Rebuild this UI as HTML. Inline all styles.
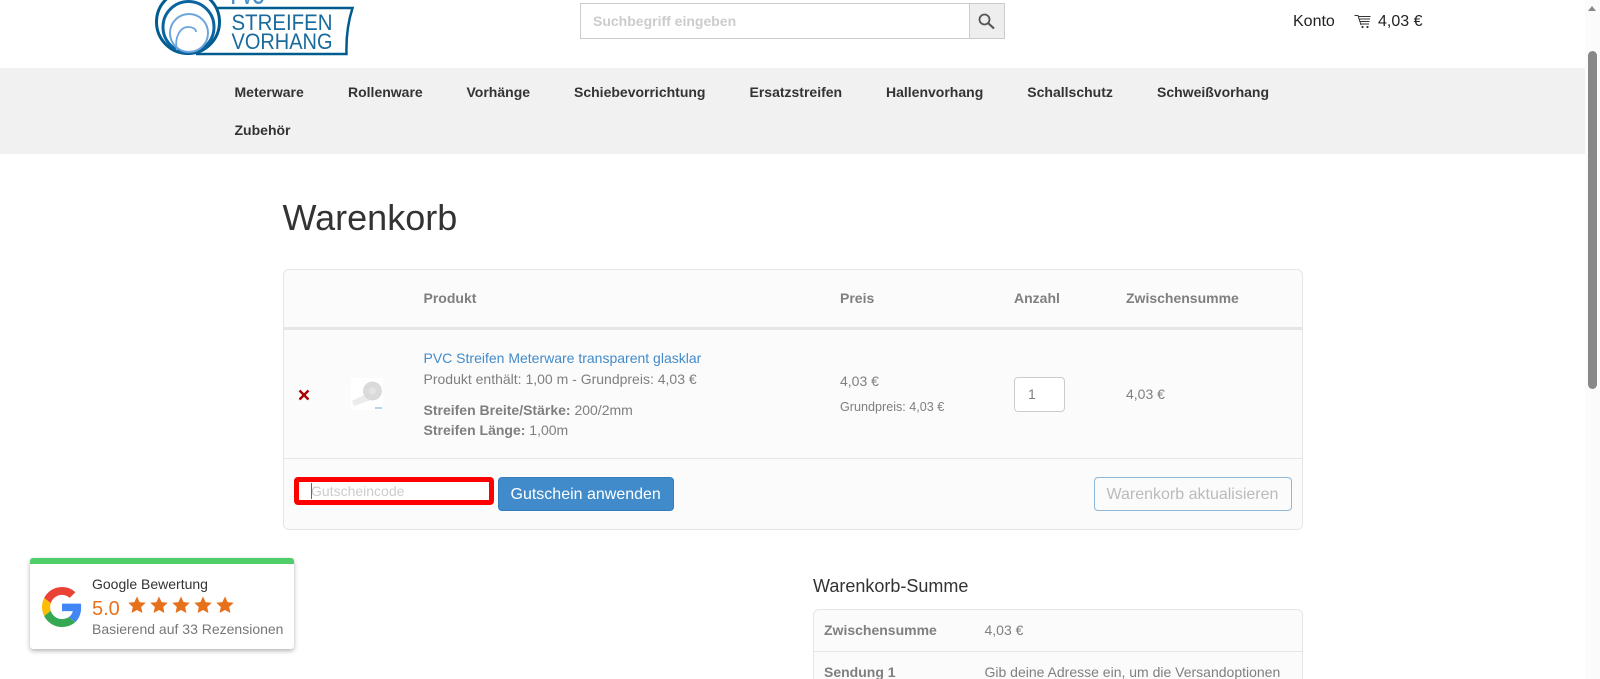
<!DOCTYPE html>
<html lang="de"><head><meta charset="utf-8"><title>Warenkorb</title>
<style>
html,body{margin:0;padding:0;width:1600px;height:679px;overflow:hidden;background:#fff}
body{position:relative;font-family:"Liberation Sans",sans-serif;font-size:14px;color:#7f7f7f}
.t{position:absolute;white-space:nowrap;line-height:20px;height:20px}
.b{font-weight:bold}
.box{position:absolute;box-sizing:border-box}
.nav{color:#333;font-weight:bold;font-size:14px}
</style></head><body>

<!-- logo -->
<svg class="box" style="left:150px;top:0" width="210" height="60" viewBox="150 0 210 60">
<path d="M212 8H352.500C348 22 346 38 346.500 54H196" fill="#fff" stroke="#005b8f" stroke-width="2.500"/>
<circle cx="188" cy="22" r="31.500" fill="#fff" stroke="#005b8f" stroke-width="3"/>
<circle cx="188.500" cy="27" r="25.500" fill="none" stroke="#0a649f" stroke-width="3"/>
<circle cx="189" cy="33" r="19" fill="none" stroke="#6ea6dc" stroke-width="2"/>
<path d="M177 50C174 38 180 27 188 27C193 27 196 29 196 32" fill="none" stroke="#6ea6dc" stroke-width="1.800"/>
<text x="231.500" y="30" font-family="Liberation Sans" font-size="22" fill="#1a6a9c" textLength="101" lengthAdjust="spacingAndGlyphs">STREIFEN</text>
<text x="231.500" y="49" font-family="Liberation Sans" font-size="22" fill="#1a6a9c" textLength="101" lengthAdjust="spacingAndGlyphs">VORHANG</text>
<text x="231" y="4" font-family="Liberation Sans" font-weight="bold" font-size="20" fill="#4a90c8" textLength="33" lengthAdjust="spacingAndGlyphs">PVC</text>
</svg>

<!-- search -->
<div class="box" style="left:580px;top:3px;width:390px;height:36px;border:1px solid #ccc;background:#fff"></div>
<div class="t b" style="left:593px;top:11px;color:#ccc">Suchbegriff eingeben</div>
<div class="box" style="left:969px;top:3px;width:36px;height:36px;border:1px solid #ccc;background:#eee"></div>
<svg class="box" style="left:977px;top:12px" width="20" height="18" viewBox="977 12 20 18"><circle cx="984.500" cy="19.500" r="5" fill="none" stroke="#555" stroke-width="1.800"/><path d="M988 23L994 28.500" stroke="#555" stroke-width="2.200"/></svg>

<div class="t" style="left:1293px;top:12px;font-size:16px;color:#222">Konto</div>
<svg class="box" style="left:1353px;top:13px" width="19" height="16" viewBox="1353 13 19 16" fill="none" stroke="#333" stroke-width="1"><path d="M1354.500 15.500H1358L1361 25"/><path d="M1358.500 16.500H1370.500M1359.500 19H1370M1360 21.500H1369.500M1361 24H1369"/><circle cx="1362.500" cy="27" r="1.100" fill="#333" stroke="none"/><circle cx="1367.500" cy="27" r="1.100" fill="#333" stroke="none"/></svg>
<div class="t" style="left:1378px;top:12px;font-size:16px;color:#222">4,03 €</div>

<!-- nav -->
<div class="box" style="left:0;top:68px;width:1585px;height:86px;background:#f1f1f1"></div>
<div class="t nav" style="left:234.500px;top:82px">Meterware</div>
<div class="t nav" style="left:348px;top:82px">Rollenware</div>
<div class="t nav" style="left:466.500px;top:82px">Vorhänge</div>
<div class="t nav" style="left:574px;top:82px">Schiebevorrichtung</div>
<div class="t nav" style="left:749.500px;top:82px">Ersatzstreifen</div>
<div class="t nav" style="left:886px;top:82px">Hallenvorhang</div>
<div class="t nav" style="left:1027.300px;top:82px">Schallschutz</div>
<div class="t nav" style="left:1157px;top:82px">Schweißvorhang</div>
<div class="t nav" style="left:234.500px;top:120px">Zubehör</div>

<!-- scrollbar -->
<div class="box" style="left:1585px;top:0;width:15px;height:679px;background:#fbfbfb"></div>
<div class="box" style="left:1588px;top:6px;width:0;height:0;border-left:4.500px solid transparent;border-right:4.500px solid transparent;border-bottom:5px solid #888"></div>
<div class="box" style="left:1588px;top:51px;width:9px;height:338px;background:#888;border-radius:5px"></div>

<div class="t" style="left:282.500px;top:198px;font-size:36px;line-height:40px;height:40px;color:#333">Warenkorb</div>

<!-- cart table -->
<div class="box" style="left:283px;top:269px;width:1020px;height:261px;border:1px solid #e6e6e6;border-radius:6px;background:#fbfbfb"></div>
<div class="box" style="left:284px;top:327px;width:1018px;height:3px;background:#e6e6e6"></div>
<div class="box" style="left:284px;top:458px;width:1018px;height:1px;background:#e6e6e6"></div>
<div class="t b" style="left:423.500px;top:288px">Produkt</div>
<div class="t b" style="left:840px;top:288px">Preis</div>
<div class="t b" style="left:1014px;top:288px">Anzahl</div>
<div class="t b" style="left:1126px;top:288px">Zwischensumme</div>

<svg class="box" style="left:298px;top:389px" width="12" height="12" viewBox="0 0 12 12"><path d="M1.500 1.500L10.500 10.500M10.500 1.500L1.500 10.500" stroke="#a80000" stroke-width="2.400"/></svg>
<svg class="box" style="left:351px;top:378px" width="32" height="32" viewBox="0 0 32 32"><rect width="32" height="32" fill="#fff"/><path d="M1 23L15 16L20 22L3 28Z" fill="#ececec"/><circle cx="21.500" cy="13" r="9.500" fill="#dadada"/><circle cx="21.500" cy="13" r="3.500" fill="#e4e4e4"/><rect x="24" y="29" width="7" height="2" fill="#b5d3e8"/></svg>

<div class="t" style="left:423.500px;top:348px;color:#428bca">PVC Streifen Meterware transparent glasklar</div>
<div class="t" style="left:423.500px;top:369px">Produkt enthält: 1,00 m - Grundpreis: 4,03 €</div>
<div class="t" style="left:423.500px;top:400px"><b>Streifen Breite/Stärke:</b> 200/2mm</div>
<div class="t" style="left:423.500px;top:420px"><b>Streifen Länge:</b> 1,00m</div>

<div class="t" style="left:840px;top:371px">4,03 €</div>
<div class="t" style="left:840px;top:396.500px;font-size:12.600px">Grundpreis: 4,03 €</div>
<div class="box" style="left:1014px;top:377px;width:51px;height:35px;border:1px solid #ccc;border-radius:4px;background:#fff"></div>
<div class="t" style="left:1028px;top:384px">1</div>
<div class="t" style="left:1126px;top:384px">4,03 €</div>

<div class="box" style="left:294px;top:477px;width:200px;height:28px;border:5px solid #f00;border-radius:4px;background:#fff"></div>
<div class="t" style="left:311px;top:481px;color:#ccc">Gutscheincode</div>
<div class="box" style="left:311px;top:483px;width:1px;height:16px;background:#666"></div>
<div class="box" style="left:498px;top:477px;width:176px;height:34px;background:#428bca;border:1px solid #357ebd;border-radius:4px"></div>
<div class="t" style="left:510.500px;top:485px;font-size:16px;color:#fff">Gutschein anwenden</div>
<div class="box" style="left:1094px;top:477px;width:198px;height:34px;border:1px solid #8fb7d8;border-radius:4px"></div>
<div class="t" style="left:1106.500px;top:485px;font-size:16px;color:#bbb">Warenkorb aktualisieren</div>

<!-- totals -->
<div class="t" style="left:813px;top:576px;font-size:18px;color:#333">Warenkorb-Summe</div>
<div class="box" style="left:813px;top:609px;width:490px;height:90px;border:1px solid #e6e6e6;border-radius:6px;background:#fbfbfb"></div>
<div class="box" style="left:814px;top:651px;width:488px;height:1px;background:#e6e6e6"></div>
<div class="t b" style="left:824px;top:620px">Zwischensumme</div>
<div class="t" style="left:984.500px;top:620px">4,03 €</div>
<div class="t b" style="left:824px;top:662px">Sendung 1</div>
<div class="t" style="left:984.500px;top:662px">Gib deine Adresse ein, um die Versandoptionen</div>

<!-- google badge -->
<div class="box" style="left:30px;top:558px;width:264px;height:91px;background:#fff;border-top:6px solid #4fce6a;border-radius:3px;box-shadow:0 2px 5px rgba(0,0,0,.3)"></div>
<svg class="box" style="left:41.500px;top:587px" width="40" height="40" viewBox="0 0 48 48">
<path fill="#EA4335" d="M24 9.500c3.540 0 6.710 1.220 9.210 3.600l6.850-6.850C35.900 2.380 30.470 0 24 0 14.620 0 6.510 5.380 2.560 13.220l7.980 6.190C12.430 13.720 17.740 9.500 24 9.500z"/>
<path fill="#4285F4" d="M46.980 24.550c0-1.570-.15-3.090-.38-4.550H24v9.020h12.940c-.58 2.960-2.260 5.480-4.780 7.180l7.730 6c4.510-4.180 7.090-10.360 7.090-17.650z"/>
<path fill="#FBBC05" d="M10.530 28.590c-.48-1.450-.76-2.990-.76-4.590s.27-3.140.76-4.590l-7.980-6.190C.92 16.460 0 20.120 0 24c0 3.880.92 7.540 2.560 10.780l7.970-6.190z"/>
<path fill="#34A853" d="M24 48c6.480 0 11.930-2.130 15.890-5.810l-7.730-6c-2.150 1.450-4.920 2.300-8.160 2.300-6.260 0-11.570-4.220-13.470-9.910l-7.980 6.190C6.510 42.620 14.620 48 24 48z"/>
</svg>
<div class="t" style="left:92px;top:574px;color:#333">Google Bewertung</div>
<div class="t" style="left:92px;top:598px;font-size:20px;line-height:22px;color:#e7711b">5.0</div>
<svg class="box" style="left:128px;top:596px" width="108" height="18" viewBox="128 596 108 18" fill="#e7711b">
<path d="M137 596.500l2.600 5.600 6.100.7-4.500 4.200 1.200 6-5.400-3-5.400 3 1.200-6-4.500-4.200 6.100-.7z"/>
<path d="M159 596.500l2.600 5.600 6.100.7-4.500 4.200 1.200 6-5.400-3-5.400 3 1.200-6-4.500-4.200 6.100-.7z"/>
<path d="M181 596.500l2.600 5.600 6.100.7-4.500 4.200 1.200 6-5.400-3-5.400 3 1.200-6-4.500-4.200 6.100-.7z"/>
<path d="M203 596.500l2.600 5.600 6.100.7-4.500 4.200 1.200 6-5.400-3-5.400 3 1.200-6-4.500-4.200 6.100-.7z"/>
<path d="M225 596.500l2.600 5.600 6.100.7-4.500 4.200 1.200 6-5.400-3-5.400 3 1.200-6-4.500-4.200 6.100-.7z"/>
</svg>
<div class="t" style="left:92px;top:619px;color:#777">Basierend auf 33 Rezensionen</div>

</body></html>
